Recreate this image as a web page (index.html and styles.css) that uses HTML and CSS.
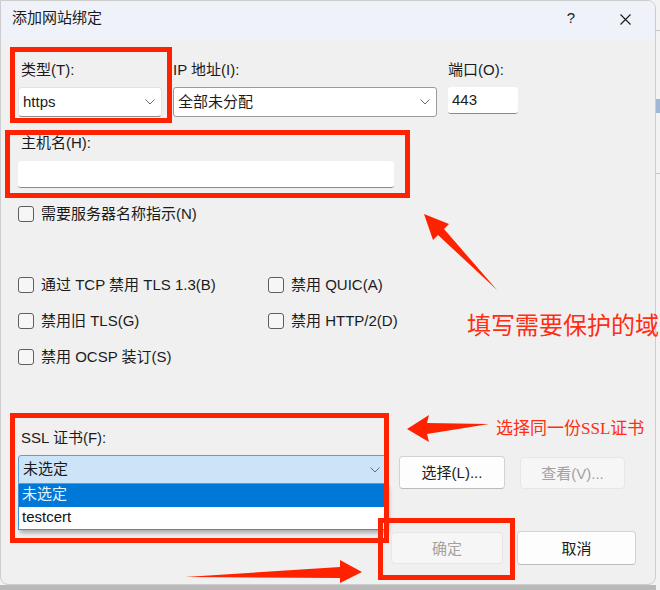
FILE: index.html
```html
<!DOCTYPE html>
<html lang="zh-CN">
<head>
<meta charset="utf-8">
<title>添加网站绑定</title>
<link rel="stylesheet" href="styles.css">
</head>
<body>
<div class="desk">
  <div class="window">
    <div class="titlebar">
      <span class="title">添加网站绑定</span>
      <span class="help">?</span>
      <svg class="close" width="11" height="11" viewBox="0 0 11 11"><path d="M0.5 0.5 L10.5 10.5 M10.5 0.5 L0.5 10.5" stroke="#1b1b1b" stroke-width="1.1" fill="none"/></svg>
    </div>
    <div class="content">
      <div class="row-top">
        <div class="field">
          <div class="lbl lbl-first">类型(T):</div>
          <div class="combo"><span>https</span><svg class="chev" width="10" height="6" viewBox="0 0 10 6"><path d="M0.5 0.5 L5 5 L9.5 0.5" stroke="#6b6b6b" stroke-width="1" fill="none"/></svg></div>
        </div>
        <div class="field">
          <div class="lbl">IP 地址(I):</div>
          <div class="combo combo-ip"><span>全部未分配</span><svg class="chev" width="10" height="6" viewBox="0 0 10 6"><path d="M0.5 0.5 L5 5 L9.5 0.5" stroke="#6b6b6b" stroke-width="1" fill="none"/></svg></div>
        </div>
        <div class="field">
          <div class="lbl">端口(O):</div>
          <div class="input">443</div>
        </div>
      </div>

      <div class="host">
        <div class="lbl lbl-first lbl-host">主机名(H):</div>
        <div class="input input-host"></div>
      </div>

      <div class="check check-sni"><span class="box"></span><span>需要服务器名称指示(N)</span></div>

      <div class="check-grid">
        <div class="check"><span class="box"></span><span>通过 TCP 禁用 TLS 1.3(B)</span></div>
        <div class="check"><span class="box"></span><span>禁用 QUIC(A)</span></div>
        <div class="check"><span class="box"></span><span>禁用旧 TLS(G)</span></div>
        <div class="check"><span class="box"></span><span>禁用 HTTP/2(D)</span></div>
        <div class="check"><span class="box"></span><span>禁用 OCSP 装订(S)</span></div>
      </div>

      <div class="ssl">
        <div class="lbl lbl-first">SSL 证书(F):</div>
        <div class="ssl-row">
          <div class="ssl-select">
            <div class="combo combo-ssl"><span>未选定</span><svg class="chev" width="10" height="6" viewBox="0 0 10 6"><path d="M0.5 0.5 L5 5 L9.5 0.5" stroke="#6b6b6b" stroke-width="1" fill="none"/></svg></div>
            <div class="droplist">
              <div class="item item-sel">未选定</div>
              <div class="item">testcert</div>
            </div>
          </div>
          <div class="btn btn-select">选择(L)...</div>
          <div class="btn btn-view disabled">查看(V)...</div>
        </div>
      </div>

      <div class="bottom">
        <div class="btn btn-ok disabled">确定</div>
        <div class="btn btn-cancel">取消</div>
      </div>
    </div>
  </div>
  <div class="strip-right"><span class="sr-line sr-a"></span><span class="sr-line sr-b"></span><span class="sr-line sr-c"></span></div>
  <div class="strip-bottom"></div>

  <div class="rbox rbox-type"></div>
  <div class="rbox rbox-host"></div>
  <div class="rbox rbox-ssl"></div>
  <div class="rbox rbox-ok"></div>

  <svg class="arrows" width="660" height="590" viewBox="0 0 660 590">
    <polygon points="424,214 449,224 444,229 497,290 438,235 433,240" fill="#ff2200"/>
    <polygon points="407,429 429,415 427,423 489,424 427,434 429,442" fill="#ff2200"/>
    <polygon points="185,577 340,567 340,560 362,572 340,583 340,578" fill="#ff2200"/>
  </svg>
  <div class="note note-host">填写需要保护的域</div>
  <div class="note note-ssl">选择同一份SSL证书</div>
</div>
</body>
</html>
```

FILE: styles.css
```css
* { box-sizing: border-box; }
html, body { margin: 0; padding: 0; }
body {
  width: 660px;
  height: 590px;
  overflow: hidden;
  background: #f4f4f4;
  font-family: "Liberation Sans", "Noto Sans CJK SC", sans-serif;
  font-size: 15px;
  color: #1b1b1b;
}
.desk {
  position: relative;
  display: grid;
  grid-template-columns: 656px 4px;
  grid-template-rows: 585px 5px;
  width: 660px;
  height: 590px;
}
.window {
  grid-column: 1;
  grid-row: 1;
  background: #f0f0f0;
  border: 1px solid #cdcdcd;
  border-radius: 0 8px 8px 8px;
  display: flex;
  flex-direction: column;
  overflow: hidden;
}
.titlebar {
  height: 38px;
  flex: none;
  background: #eff2f8;
  display: flex;
  align-items: center;
  padding-left: 11px;
  padding-bottom: 4px;
}
.title { font-size: 15px; line-height: 20px; }
.help {
  margin-left: auto;
  width: 20px;
  text-align: center;
  font-size: 15px;
  line-height: 20px;
}
.close { margin-left: 39px; margin-right: 24px; margin-top: 2px; }

.content {
  flex: 1;
  display: flex;
  flex-direction: column;
  padding: 21px 19px 19px 17px;
}
.row-top {
  display: grid;
  grid-template-columns: 144px 264px 70px;
  column-gap: 11px;
  align-items: start;
}
.lbl {
  height: 20px;
  line-height: 20px;
  margin-bottom: 7px;
  white-space: nowrap;
}
.lbl-first { padding-left: 3px; }
.combo {
  height: 30px;
  background: #ffffff;
  border: 1px solid #e2e2e2;
  border-bottom-color: #8e8e8e;
  border-radius: 4px;
  display: flex;
  align-items: center;
  justify-content: space-between;
  padding: 0 6px 0 4px;
  line-height: 20px;
}
.combo-ip { border-color: #9a9a9a; border-radius: 3px; }
.combo span { margin-top: -1px; }
.chev { flex: none; }
.input {
  height: 27px;
  background: #ffffff;
  border-bottom: 1px solid #8a8a8a;
  border-radius: 3px;
  padding-left: 4px;
  padding-bottom: 1px;
  display: flex;
  align-items: center;
}
.host { margin-top: 16px; }
.lbl-host { margin-bottom: 8px; }
.input-host { width: 376px; }

.check {
  height: 22px;
  display: flex;
  align-items: center;
  white-space: nowrap;
}
.check span:last-child { margin-top: -3px; }
.box {
  width: 16px;
  height: 16px;
  flex: none;
  border: 1px solid #5e5e5e;
  border-radius: 3px;
  background: #f6f6f6;
  margin-right: 7px;
}
.check-sni { margin-top: 15px; }
.check-grid {
  margin-top: 49px;
  display: grid;
  grid-template-columns: 250px auto;
  row-gap: 14px;
}

.ssl { margin-top: 60px; }
.ssl .lbl { margin-bottom: 7px; }
.ssl-row {
  display: flex;
  align-items: flex-start;
}
.ssl-select { position: relative; width: 369px; }
.combo-ssl {
  height: 29px;
  background: #cce4f7;
  border: 1px solid #5e9fdb;
  border-radius: 3px 3px 0 0;
}
.droplist {
  position: absolute;
  left: 0;
  top: 29px;
  width: 369px;
  background: #ffffff;
  border: 1px solid #3f8fd8;
  border-top: none;
  box-shadow: 2px 3px 4px rgba(0, 0, 0, 0.28);
}
.item {
  height: 22px;
  line-height: 20px;
  padding-left: 3px;
  color: #111111;
}
.item-sel { height: 23px; background: #0078d7; color: #eaf3fc; }

.btn {
  display: flex;
  align-items: center;
  justify-content: center;
  background: #fdfdfd;
  border: 1px solid #d3d3d3;
  border-bottom-color: #bcbcbc;
  border-radius: 4px;
  color: #1b1b1b;
  white-space: nowrap;
  padding-bottom: 2px;
}
.btn.disabled {
  background: #f6f6f6;
  border-color: #e6e6e6;
  color: #a2a2a2;
}
.btn-select { width: 106px; height: 33px; margin-left: 12px; margin-top: 1px; }
.btn-view { width: 105px; height: 32px; margin-left: 15px; margin-top: 2px; }

.bottom {
  margin-top: auto;
  display: flex;
  justify-content: flex-end;
  align-items: center;
  gap: 14px;
}
.btn-ok { width: 112px; height: 32px; }
.btn-cancel { width: 119px; height: 34px; }

.strip-right {
  grid-column: 2;
  grid-row: 1 / span 2;
  background: #f3f3f3;
  display: flex;
  flex-direction: column;
}
.sr-line { display: block; height: 1px; background: #c4c4c4; }
.sr-a { margin-top: 30px; }
.sr-b { margin-top: 68px; height: 14px; background: #9fb8d8; }
.sr-c { margin-top: 60px; }
.strip-bottom {
  grid-column: 1;
  grid-row: 2;
  background: #b9b9b9;
}

.rbox {
  position: absolute;
  border: 5px solid #ff2200;
}
.rbox-type { left: 10px; top: 47px; width: 162px; height: 76px; }
.rbox-host { left: 5px; top: 130px; width: 405px; height: 68px; }
.rbox-ssl { left: 10px; top: 413px; width: 379px; height: 130px; }
.rbox-ok { left: 378px; top: 518px; width: 137px; height: 62px; }

.arrows { position: absolute; left: 0; top: 0; pointer-events: none; }
.note {
  position: absolute;
  color: #ff2d12;
  white-space: nowrap;
  font-family: "Noto Sans CJK SC", sans-serif;
}
.note-host {
  left: 467px;
  top: 309px;
  font-size: 24px;
  line-height: 30px;
}
.note-ssl {
  left: 496px;
  top: 418px;
  font-size: 17px;
  line-height: 22px;
  font-family: "Liberation Serif", "Noto Sans CJK SC", serif;
}
```
